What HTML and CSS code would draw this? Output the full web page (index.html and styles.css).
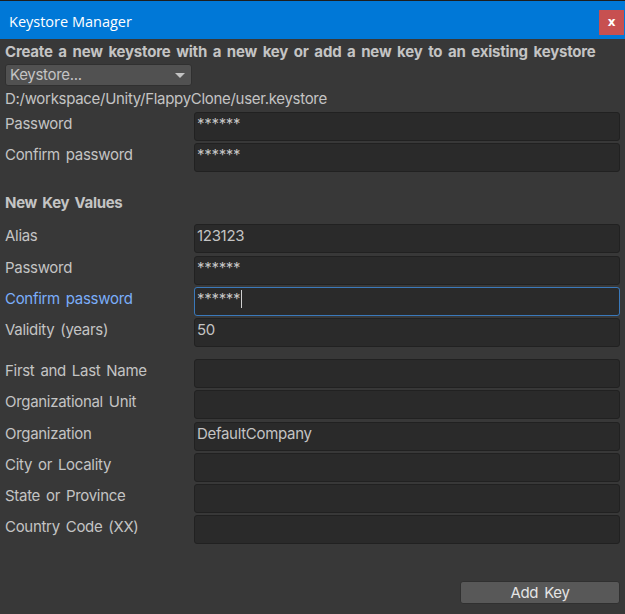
FILE: index.html
```html
<!DOCTYPE html>
<html>
<head>
<meta charset="utf-8">
<link rel="stylesheet" href="styles.css">
</head>
<body>
<div class="window">
  <div class="titlebar">
    <span class="title">Keystore Manager</span>
    <span class="close">x</span>
  </div>
  <div class="content">
    <div class="heading">Create a new keystore with a new key or add a new key to an existing keystore</div>
    <div class="dropdown"><span>Keystore...</span><span class="arrow"></span></div>
    <div class="path">D:/workspace/Unity/FlappyClone/user.keystore</div>
    <div class="rows">
      <div class="row"><div class="label">Password</div><div class="field">******</div></div>
      <div class="row"><div class="label">Confirm password</div><div class="field">******</div></div>
    </div>
    <div class="section">New Key Values</div>
    <div class="rows">
      <div class="row"><div class="label">Alias</div><div class="field">123123</div></div>
      <div class="row"><div class="label">Password</div><div class="field">******</div></div>
      <div class="row focused"><div class="label">Confirm password</div><div class="field">******<span class="caret"></span></div></div>
      <div class="row"><div class="label">Validity (years)</div><div class="field">50</div></div>
    </div>
    <div class="rows group2">
      <div class="row"><div class="label">First and Last Name</div><div class="field"></div></div>
      <div class="row"><div class="label">Organizational Unit</div><div class="field"></div></div>
      <div class="row"><div class="label">Organization</div><div class="field">DefaultCompany</div></div>
      <div class="row"><div class="label">City or Locality</div><div class="field"></div></div>
      <div class="row"><div class="label">State or Province</div><div class="field"></div></div>
      <div class="row"><div class="label">Country Code (XX)</div><div class="field"></div></div>
    </div>
    <div class="actions"><div class="button">Add Key</div></div>
  </div>
</div>
</body>
</html>
```
FILE: styles.css
```css
html, body {
  margin: 0;
  padding: 0;
  background: #383838;
}
.window {
  width: 625px;
  height: 614px;
  overflow: hidden;
  background: #383838;
  font-family: Inter, "Noto Sans", sans-serif;
  font-size: 15px;
  letter-spacing: -0.3px;
  word-spacing: 2px;
  color: #c4c4c4;
}
.titlebar {
  height: 38px;
  border-top: 1px solid #1e1e1e;
  background: #0078d7;
  display: flex;
  align-items: center;
  justify-content: space-between;
  padding: 0 1px 0 9px;
}
.title {
  font-family: "Open Sans", "Noto Sans", sans-serif;
  font-size: 14.5px;
  letter-spacing: 0;
  word-spacing: 0;
  color: #ffffff;
  margin-top: 2px;
}
.close {
  width: 25px;
  height: 25px;
  background: #c75050;
  color: #ffffff;
  font-family: "DejaVu Sans", sans-serif;
  font-size: 12px;
  font-weight: bold;
  letter-spacing: 0;
  line-height: 25px;
  display: flex;
  align-items: center;
  justify-content: center;
  margin-top: 5px;
}
.content {
  padding: 4px 5px 0 5px;
}
.heading {
  font-weight: bold;
  font-size: 15px;
  letter-spacing: -0.2px;
  word-spacing: 2.3px;
  line-height: 18px;
  white-space: nowrap;
}
.dropdown {
  margin-top: 3px;
  height: 20px;
  border: 1px solid #303030;
  border-radius: 3px;
  background: #515151;
  display: flex;
  align-items: center;
  justify-content: space-between;
  padding: 0 6px 0 4px;
  box-sizing: content-box;
  width: 175px;
  line-height: 20px;
}
.arrow {
  width: 0;
  height: 0;
  border-left: 5px solid transparent;
  border-right: 5px solid transparent;
  border-top: 5px solid #c4c4c4;
}
.path {
  line-height: 20px;
  margin-top: 3px;
  margin-bottom: 3px;
}
.rows {
  display: flex;
  flex-direction: column;
  gap: 2.25px;
}
.row {
  display: grid;
  grid-template-columns: 189px 1fr;
  height: 29px;
}
.label {
  padding-top: 2px;
  line-height: 20px;
}
.field {
  background: #2a2a2a;
  border: 1px solid #212121;
  border-radius: 3px;
  padding: 1px 3px 0 2px;
  line-height: 20px;
  display: flex;
  align-items: flex-start;
}
.focused .label {
  color: #7baefa;
}
.focused .field {
  border-color: #3a79bb;
}
.caret {
  display: inline-block;
  width: 1px;
  height: 18px;
  background: #d0d0d0;
  margin-left: 1px;
  margin-top: 1px;
}
.section {
  font-weight: bold;
  line-height: 20px;
  margin-top: 21px;
  margin-bottom: 11px;
}
.group2 {
  margin-top: 12px;
}
.actions {
  display: flex;
  justify-content: flex-end;
  margin-top: 37px;
}
.button {
  width: 158px;
  height: 21px;
  background: #585858;
  border: 1px solid #303030;
  border-radius: 3px;
  color: #e4e4e4;
  text-align: center;
  line-height: 22px;
}
```
